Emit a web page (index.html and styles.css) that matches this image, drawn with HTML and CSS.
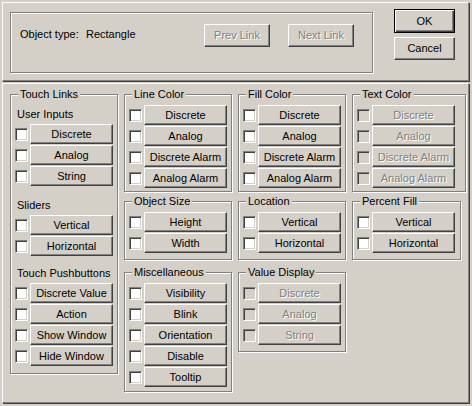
FILE: index.html
```html
<!DOCTYPE html>
<html>
<head>
<meta charset="utf-8">
<title>Touch Links</title>
<link rel="stylesheet" href="styles.css">
</head>
<body>
<div class="dialog">
  <div class="top-panel">
    <div class="info-frame">
      <span class="lbl">Object type:</span>
      <span class="val">Rectangle</span>
      <button class="btn link-btn disabled">Prev Link</button>
      <button class="btn link-btn disabled">Next Link</button>
    </div>
    <div class="dlg-buttons">
      <button class="btn dlg-btn default">OK</button>
      <button class="btn dlg-btn">Cancel</button>
    </div>
  </div>

  <div class="main-panel">
    <div class="group col1">
      <div class="title">Touch Links</div>
      <div class="sub sub-first">User Inputs</div>
      <div class="rows">
        <div class="row"><span class="cb"></span><button class="btn item">Discrete</button></div>
        <div class="row"><span class="cb"></span><button class="btn item">Analog</button></div>
        <div class="row"><span class="cb"></span><button class="btn item">String</button></div>
      </div>
      <div class="sub sub-sliders">Sliders</div>
      <div class="rows">
        <div class="row"><span class="cb"></span><button class="btn item">Vertical</button></div>
        <div class="row"><span class="cb"></span><button class="btn item">Horizontal</button></div>
      </div>
      <div class="sub sub-push">Touch Pushbuttons</div>
      <div class="rows rows-last">
        <div class="row"><span class="cb"></span><button class="btn item">Discrete Value</button></div>
        <div class="row"><span class="cb"></span><button class="btn item">Action</button></div>
        <div class="row"><span class="cb"></span><button class="btn item">Show Window</button></div>
        <div class="row"><span class="cb"></span><button class="btn item">Hide Window</button></div>
      </div>
    </div>

    <div class="column">
      <div class="group g-first">
        <div class="title">Line Color</div>
        <div class="rows">
          <div class="row"><span class="cb"></span><button class="btn item">Discrete</button></div>
          <div class="row"><span class="cb"></span><button class="btn item">Analog</button></div>
          <div class="row"><span class="cb"></span><button class="btn item">Discrete Alarm</button></div>
          <div class="row"><span class="cb"></span><button class="btn item">Analog Alarm</button></div>
        </div>
      </div>
      <div class="group g-second">
        <div class="title">Object Size</div>
        <div class="rows">
          <div class="row"><span class="cb"></span><button class="btn item">Height</button></div>
          <div class="row"><span class="cb"></span><button class="btn item">Width</button></div>
        </div>
      </div>
      <div class="group g-third g-misc">
        <div class="title">Miscellaneous</div>
        <div class="rows">
          <div class="row"><span class="cb"></span><button class="btn item">Visibility</button></div>
          <div class="row"><span class="cb"></span><button class="btn item">Blink</button></div>
          <div class="row"><span class="cb"></span><button class="btn item">Orientation</button></div>
          <div class="row"><span class="cb"></span><button class="btn item">Disable</button></div>
          <div class="row"><span class="cb"></span><button class="btn item">Tooltip</button></div>
        </div>
      </div>
    </div>

    <div class="column">
      <div class="group g-first">
        <div class="title">Fill Color</div>
        <div class="rows">
          <div class="row"><span class="cb"></span><button class="btn item">Discrete</button></div>
          <div class="row"><span class="cb"></span><button class="btn item">Analog</button></div>
          <div class="row"><span class="cb"></span><button class="btn item">Discrete Alarm</button></div>
          <div class="row"><span class="cb"></span><button class="btn item">Analog Alarm</button></div>
        </div>
      </div>
      <div class="group g-second">
        <div class="title">Location</div>
        <div class="rows">
          <div class="row"><span class="cb"></span><button class="btn item">Vertical</button></div>
          <div class="row"><span class="cb"></span><button class="btn item">Horizontal</button></div>
        </div>
      </div>
      <div class="group g-third g-value">
        <div class="title">Value Display</div>
        <div class="rows">
          <div class="row"><span class="cb disabled"></span><button class="btn item disabled">Discrete</button></div>
          <div class="row"><span class="cb disabled"></span><button class="btn item disabled">Analog</button></div>
          <div class="row"><span class="cb disabled"></span><button class="btn item disabled">String</button></div>
        </div>
      </div>
    </div>

    <div class="column col4">
      <div class="group g-first g-text">
        <div class="title">Text Color</div>
        <div class="rows">
          <div class="row"><span class="cb disabled"></span><button class="btn item disabled">Discrete</button></div>
          <div class="row"><span class="cb disabled"></span><button class="btn item disabled">Analog</button></div>
          <div class="row"><span class="cb disabled"></span><button class="btn item disabled">Discrete Alarm</button></div>
          <div class="row"><span class="cb disabled"></span><button class="btn item disabled">Analog Alarm</button></div>
        </div>
      </div>
      <div class="group g-second g-percent">
        <div class="title">Percent Fill</div>
        <div class="rows">
          <div class="row"><span class="cb"></span><button class="btn item">Vertical</button></div>
          <div class="row"><span class="cb"></span><button class="btn item">Horizontal</button></div>
        </div>
      </div>
    </div>
  </div>
</div>
</body>
</html>
```
FILE: styles.css
```css
* { box-sizing: border-box; }
html, body { margin: 0; padding: 0; }
body {
  width: 472px;
  height: 406px;
  overflow: hidden;
  background: #d4d0c8;
  font-family: "Liberation Sans", Arial, sans-serif;
  font-size: 11px;
  color: #000;
}
.dialog { padding: 2px 0 0 2px; }

/* generic classic button */
.btn {
  margin: 0;
  padding: 0;
  font: inherit;
  color: #000;
  background: #d4d0c8;
  border: 1px solid;
  border-color: #fff #404040 #404040 #fff;
  box-shadow: inset -1px -1px 0 #808080;
  line-height: 13px;
  text-align: center;
  white-space: nowrap;
}
.btn.disabled {
  color: #808080;
  text-shadow: 1px 1px 0 #fff;
}

/* top panel */
.top-panel {
  width: 467px;
  height: 79px;
  display: flex;
  align-items: flex-start;
  border: 1px solid;
  border-color: #fff #808080 #808080 #fff;
  box-shadow: 1px 1px 0 #404040;
}
.info-frame {
  margin: 9px 0 0 7px;
  width: 363px;
  height: 61px;
  border: 1px solid #808080;
  box-shadow: inset 1px 1px 0 #fff, 1px 1px 0 #fff;
  display: flex;
  align-items: flex-start;
  padding: 11px 18px 0 9px;
}
.lbl { width: 66px; line-height: 21px; }
.val { flex: 1; line-height: 21px; }
.link-btn { width: 66px; height: 23px; }
.link-btn + .link-btn { margin-left: 18px; }
.dlg-buttons {
  margin: 6px 0 0 21px;
  display: flex;
  flex-direction: column;
  gap: 4px;
}
.dlg-btn { width: 61px; height: 23px; }
.dlg-btn.default {
  height: 24px;
  border: 1px solid #000;
  box-shadow: inset 1px 1px 0 #fff, inset -1px -1px 0 #404040, inset -2px -2px 0 #808080;
}

/* main panel */
.main-panel {
  margin-top: 2px;
  width: 467px;
  height: 320px;
  border: 1px solid;
  border-color: #fff #808080 #808080 #fff;
  box-shadow: 1px 1px 0 #404040;
  display: flex;
  align-items: flex-start;
  padding: 10px 0 0 7px;
  gap: 6px;
}
.column {
  display: flex;
  flex-direction: column;
  align-items: flex-start;
  width: 108px;
}
.col4 { width: 114px; }

.group {
  width: 108px;
  border: 1px solid #808080;
  box-shadow: inset 1px 1px 0 #fff, 1px 1px 0 #fff;
  padding: 0 4px 3px 4px;
}
.title {
  width: fit-content;
  margin: -7px 0 0 3px;
  padding: 0 2px;
  line-height: 13px;
  background: #d4d0c8;
  white-space: nowrap;
}
.col1 { padding-bottom: 7px; }
.sub { line-height: 13px; padding-left: 2px; }
.sub-first { margin-top: 7px; }
.sub-sliders { margin-top: 13px; }
.sub-push { margin-top: 11px; }
.sub + .rows { margin-top: 3px; }

.rows {
  display: flex;
  flex-direction: column;
  gap: 1px;
  margin-top: 4px;
}
.row {
  display: flex;
  align-items: center;
  gap: 2px;
  height: 20px;
}
.item { width: 83px; height: 20px; }

.cb {
  flex: none;
  width: 13px;
  height: 13px;
  background: #fff;
  border: 1px solid;
  border-color: #808080 #fff #fff #808080;
  box-shadow: inset 1px 1px 0 #404040, inset -1px -1px 0 #d4d0c8;
}
.cb.disabled { background: #d4d0c8; }

.g-second { margin-top: 9px; padding-bottom: 6px; }
.g-third { margin-top: 12px; }
.g-misc { padding-bottom: 4px; }
.g-value { padding-bottom: 6px; }
.g-text { width: 114px; }
.g-percent { width: 109px; }
```
